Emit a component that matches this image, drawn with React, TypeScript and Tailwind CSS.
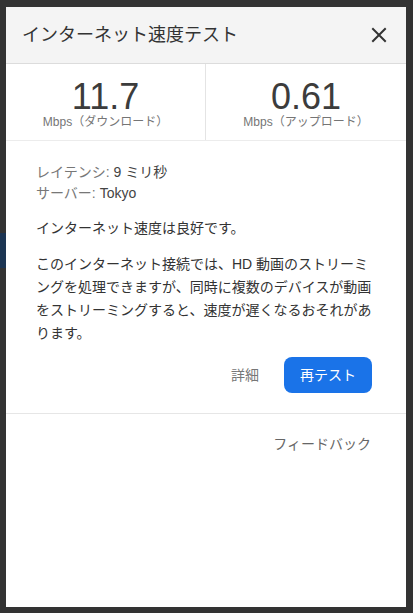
const font = {
  fontFamily: '"Liberation Sans", "Noto Sans CJK JP", sans-serif',
};

function CloseIcon() {
  return (
    <svg width="16" height="16" viewBox="0 0 16 16" className="text-[#333]">
      <path d="M2 2 L14 14 M14 2 L2 14" stroke="currentColor" strokeWidth="2" strokeLinecap="square" />
    </svg>
  );
}

function Result({ value, label, divider }: { value: string; label: string; divider?: boolean }) {
  return (
    <div className={`flex flex-col items-center pt-[16px] ${divider ? "border-r border-[#e4e4e4]" : ""}`}>
      <div className="text-[36px] leading-[34px] text-[#3c3c3c]">{value}</div>
      <div className="text-[12px] leading-[16px] text-[#757575]">{label}</div>
    </div>
  );
}

export default function App() {
  return (
    <div className="relative h-[613px] w-[413px] overflow-hidden bg-[#333333] pl-[6px] pt-[7px]" style={font}>
      <div className="absolute left-0 top-[233px] h-[35px] w-[6px] bg-[#1c3553]" />
      <div className="flex h-[600px] w-[400px] flex-col bg-white">
        <div className="flex h-[57px] items-center justify-between border-b border-[#dcdcdc] bg-[#f4f4f4] pl-4 pr-[19px]">
          <div className="text-[18px] text-[#333]">インターネット速度テスト</div>
          <CloseIcon />
        </div>

        <div className="grid h-[77px] grid-cols-2 border-b border-[#ececec]">
          <Result value="11.7" label="Mbps（ダウンロード）" divider />
          <Result value="0.61" label="Mbps（アップロード）" />
        </div>

        <div className="pl-[30px] pr-[34px] pt-[21px] text-[14px]">
          <div className="leading-[21px] text-[#777]">
            レイテンシ: <span className="text-[#444]">9 ミリ秒</span>
          </div>
          <div className="leading-[21px] text-[#777]">
            サーバー: <span className="text-[#444]">Tokyo</span>
          </div>
          <div className="mt-[14px] leading-[21px] text-[#333]">インターネット速度は良好です。</div>
          <p className="mt-[14px] whitespace-nowrap leading-[23px] text-[#333]">
            このインターネット接続では、HD 動画のストリーミ
            <br />
            ングを処理できますが、同時に複数のデバイスが動画
            <br />
            をストリーミングすると、速度が遅くなるおそれがあ
            <br />
            ります。
          </p>
          <div className="mt-[12px] flex items-center justify-end gap-[25px]">
            <span className="text-[#777]">詳細</span>
            <button className="h-[36px] w-[88px] rounded-[8px] bg-[#1a73e8] text-[14px] text-white">再テスト</button>
          </div>
        </div>

        <div className="mt-[20px] border-t border-[#e6e6e6] pr-[35px] pt-[20px] text-right text-[14px] leading-[21px] text-[#666]">
          フィードバック
        </div>
      </div>
    </div>
  );
}
